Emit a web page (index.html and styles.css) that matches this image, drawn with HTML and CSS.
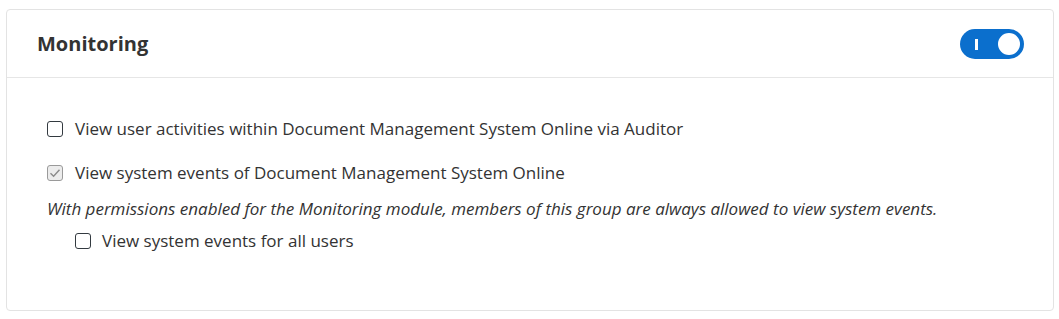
FILE: index.html
```html
<!DOCTYPE html>
<html>
<head>
<meta charset="utf-8">
<link rel="stylesheet" href="styles.css">
</head>
<body>
<div class="page">
  <section class="card">
    <header class="card-header">
      <h2 class="card-title">Monitoring</h2>
      <span class="toggle" role="switch" aria-checked="true">
        <span class="toggle-bar"></span>
        <span class="toggle-knob"></span>
      </span>
    </header>
    <div class="card-body">
      <label class="option">
        <span class="box"></span>
        <span class="option-text">View user activities within Document Management System Online via Auditor</span>
      </label>
      <label class="option option-second">
        <span class="box box-checked">
          <svg width="12" height="10" viewBox="0 0 12 10"><path d="M1.5 5.2 L4.6 8.2 L10.5 1.8" fill="none" stroke="#8a8a8a" stroke-width="1.4"/></svg>
        </span>
        <span class="option-text">View system events of Document Management System Online</span>
      </label>
      <p class="note">With permissions enabled for the Monitoring module, members of this group are always allowed to view system events.</p>
      <label class="option option-sub">
        <span class="box"></span>
        <span class="option-text">View system events for all users</span>
      </label>
    </div>
  </section>
</div>
</body>
</html>
```

FILE: styles.css
```css
html, body {
  margin: 0;
  padding: 0;
  background: #ffffff;
}

body {
  font-family: "Open Sans", "Liberation Sans", sans-serif;
  color: #333333;
}

.page {
  padding: 9px 5px 8px 6px;
}

.card {
  border: 1px solid #e3e3e3;
  border-radius: 4px;
  height: 302px;
  box-sizing: border-box;
  display: flex;
  flex-direction: column;
}

.card-header {
  height: 68px;
  box-sizing: border-box;
  border-bottom: 1px solid #e6e6e6;
  display: flex;
  align-items: center;
  justify-content: space-between;
  padding: 0 29px 0 30px;
}

.card-title {
  margin: 0;
  font-size: 20px;
  font-weight: 700;
  color: #333333;
  line-height: 26px;
}

.toggle {
  position: relative;
  width: 64px;
  height: 30px;
  border-radius: 15px;
  background: #0b6fcd;
  display: block;
  margin-top: 1px;
}

.toggle-bar {
  position: absolute;
  left: 15px;
  top: 10px;
  width: 3px;
  height: 11px;
  background: #ffffff;
}

.toggle-knob {
  position: absolute;
  right: 4px;
  top: 4px;
  width: 22px;
  height: 22px;
  border-radius: 50%;
  background: #ffffff;
}

.card-body {
  padding: 39px 40px 0 40px;
  display: flex;
  flex-direction: column;
}

.option {
  display: flex;
  align-items: center;
  gap: 12px;
  font-size: 17px;
  line-height: 24px;
  color: #333333;
}

.option-second {
  margin-top: 20px;
}

.option-sub {
  margin-left: 28px;
  gap: 11px;
}

.box {
  width: 16px;
  height: 16px;
  box-sizing: border-box;
  border: 1.5px solid #333a40;
  border-radius: 3px;
  display: flex;
  align-items: center;
  justify-content: center;
  flex: none;
}

.box-checked {
  border-color: #9a9a9a;
  background: #ececec;
}

.note {
  margin: 0;
  font-style: italic;
  font-size: 17px;
  line-height: 24px;
  color: #333333;
  margin-top: 12px;
  margin-bottom: 8px;
}
```
